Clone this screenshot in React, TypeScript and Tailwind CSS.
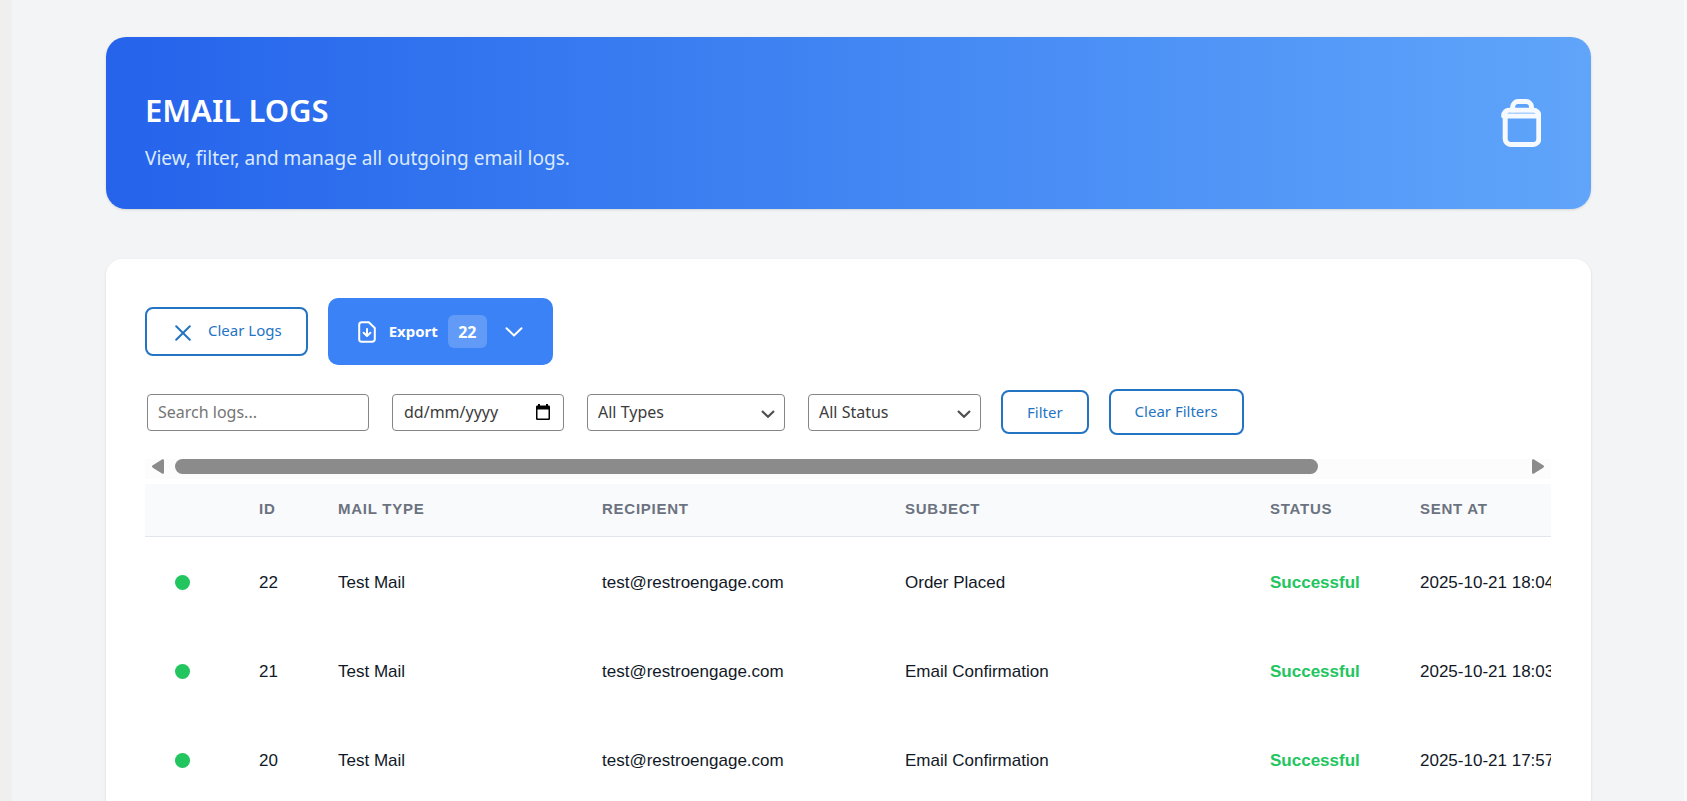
import { useRef, useState } from "react";

type Log = {
  id: number;
  type: string;
  recipient: string;
  subject: string;
  status: string;
  sentAt: string;
};

const logs: Log[] = [
  { id: 22, type: "Test Mail", recipient: "test@restroengage.com", subject: "Order Placed", status: "Successful", sentAt: "2025-10-21 18:04" },
  { id: 21, type: "Test Mail", recipient: "test@restroengage.com", subject: "Email Confirmation", status: "Successful", sentAt: "2025-10-21 18:03" },
  { id: 20, type: "Test Mail", recipient: "test@restroengage.com", subject: "Email Confirmation", status: "Successful", sentAt: "2025-10-21 17:57" },
];

const outline =
  "flex items-center justify-center rounded-lg border-2 border-[#2474c4] bg-white text-[15px] leading-5 text-[#2474c4]";
const field =
  "h-[37px] w-full rounded border border-[#858585] bg-white text-base text-[#3c3c3c] outline-none";

function BagIcon() {
  return (
    <svg className="h-12 w-10" viewBox="0 0 40 48" fill="none" stroke="#f6faff" strokeWidth="5" strokeLinecap="round" strokeLinejoin="round" aria-hidden="true">
      <path d="M11.7 11V8a5.4 5.4 0 0 1 5.4-5.4h8a5.4 5.4 0 0 1 5.4 5.4v3" />
      <path d="M2.7 17v-.4a5.4 5.4 0 0 1 5.4-5.4h24.3a5.4 5.4 0 0 1 5.4 5.4V40a5.4 5.4 0 0 1-5.4 5.4H9.6A5.4 5.4 0 0 1 4.2 40V17h33" />
      <path d="M8 14.3h6M18 14.3h6M28 14.3h5" stroke="#b4d4fd" strokeWidth="1" />
    </svg>
  );
}

function FileDownIcon() {
  return (
    <svg className="h-[22px] w-[18px]" viewBox="0 0 18 22" fill="none" stroke="white" strokeWidth="2" strokeLinecap="round" strokeLinejoin="round" aria-hidden="true">
      <path d="M3.6 1.2h7.2L16.8 7v11.2a2.6 2.6 0 0 1-2.6 2.6H3.6A2.6 2.6 0 0 1 1.2 18.2V3.8a2.6 2.6 0 0 1 2.4-2.6Z" />
      <path d="M9 8v6.800M5.600 11.800 9 15l3.400-3.200" />
    </svg>
  );
}

function Chevron({ className }: { className: string }) {
  return (
    <svg className={className} viewBox="0 0 18 10" fill="none" stroke="currentColor" strokeWidth="2" strokeLinecap="round" strokeLinejoin="round" aria-hidden="true">
      <path d="m1.500 1.200 7.500 7.300 7.500-7.300" />
    </svg>
  );
}

function SelectField({ label, options, className }: { label: string; options: string[]; className: string }) {
  return (
    <div className={`relative ${className}`}>
      <select aria-label={label} className={`${field} appearance-none pl-[10px] pr-8`}>
        {options.map((o) => (
          <option key={o}>{o}</option>
        ))}
      </select>
      <svg className="pointer-events-none absolute top-4 right-[10px] h-2 w-[14px]" viewBox="0 0 14 8" fill="none" stroke="#505050" strokeWidth="2.2" aria-hidden="true">
        <path d="m1 1 6 5.800L13 1" />
      </svg>
    </div>
  );
}

export default function App() {
  const scroller = useRef<HTMLDivElement>(null);
  const [offset, setOffset] = useState(0);
  const scrollBy = (left: number) => scroller.current?.scrollBy({ left, behavior: "smooth" });
  const onScroll = () => {
    const el = scroller.current;
    if (el) setOffset(el.scrollLeft / el.scrollWidth);
  };

  return (
    <div className="h-screen overflow-hidden border-r-[3px] border-l-[12px] border-r-[#f8f9fb] border-l-[#efefef] bg-[#f3f4f6] pt-[37px] pr-[93px] pl-[94px] font-['Noto_Sans','Open_Sans',sans-serif]">
      <header className="flex items-center justify-between rounded-[20px] bg-linear-to-r from-[#2563eb] to-[#60a5fa] py-[39px] pr-[50px] pl-[39px] shadow">
        <div className="pt-[14px]">
          <h1 className="text-[31px] leading-10 font-semibold text-white">EMAIL LOGS</h1>
          <p className="mt-4 text-[19px] leading-6 text-[#dbeafe]">View, filter, and manage all outgoing email logs.</p>
        </div>
        <BagIcon />
      </header>

      <main className="mt-[50px] rounded-2xl bg-white pt-[39px] pr-10 pb-10 pl-[39px] shadow">
        <div className="flex items-center gap-5">
          <button type="button" className={`${outline} h-[49px] gap-[17px] px-6`}>
            <svg className="mt-0.5 ml-1 h-4 w-4" viewBox="0 0 16 16" fill="none" stroke="currentColor" strokeWidth="2" strokeLinecap="round" aria-hidden="true">
              <path d="m1.200 1.200 13.600 13.600M14.800 1.200 1.200 14.800" />
            </svg>
            <span className="pb-1">Clear Logs</span>
          </button>
          <button type="button" className="flex h-[67px] items-center rounded-[10px] bg-[#3b82f6] px-[30px] text-[15px] font-bold text-white">
            <FileDownIcon />
            <span className="ml-[13px]">Export</span>
            <span className="ml-[10px] flex h-[33px] w-[39px] items-center justify-center rounded-md bg-white/20 text-base">22</span>
            <Chevron className="ml-[18px] h-[10px] w-[18px]" />
          </button>
        </div>

        <form className="mt-6 flex items-center gap-5" onSubmit={(e) => e.preventDefault()}>
          <div className="flex gap-[23px] pl-0.5">
            <div className="w-[222px]">
              <input type="text" aria-label="Search logs" placeholder="Search logs..." className={`${field} px-[10px] placeholder:text-[#757575]`} />
            </div>
            <div className="relative w-[172px]">
              <input type="text" aria-label="Date" placeholder="dd/mm/yyyy" className={`${field} pr-9 pl-[11px] placeholder:text-[#3c3c3c]`} />
              <button type="button" aria-label="Open calendar" className="absolute top-[10px] right-[14px]">
                <svg className="h-4 w-[14px]" viewBox="0 0 14 16" aria-hidden="true">
                  <path fill="black" fillRule="evenodd" d="M2 0h2v1.5h6V0h2v1.5h.8A1.2 1.2 0 0 1 14 2.700V14.800A1.200 1.200 0 0 1 12.800 16H1.200A1.200 1.200 0 0 1 0 14.800V2.700A1.200 1.200 0 0 1 1.200 1.500H2ZM1.500 5.500v9h11v-9Z" />
                </svg>
              </button>
            </div>
            <SelectField label="Mail type" className="w-[198px]" options={["All Types"]} />
            <SelectField label="Status" className="w-[173px]" options={["All Status"]} />
          </div>
          <button type="submit" className={`${outline} h-11 px-6`}>Filter</button>
          <button type="reset" className={`${outline} h-[46px] px-6 pb-0.5`}>Clear Filters</button>
        </form>

        <div className="mt-6 flex h-5 bg-[#fcfcfc]">
          <button type="button" aria-label="Scroll left" className="h-[15px] w-[30px] pl-[7px]" onClick={() => scrollBy(-200)}>
            <svg className="h-[15px] w-3" viewBox="0 0 12 15" fill="#8b8b8b" aria-hidden="true">
              <path d="M12 1.500v12a1.300 1.300 0 0 1-2 1.100L.8 8.700a1.500 1.500 0 0 1 0-2.400L10 .4a1.300 1.300 0 0 1 2 1.100Z" />
            </svg>
          </button>
          <div className="flex-1">
            <div className="h-[15px] w-[84.5%] rounded-full bg-[#8b8b8b]" style={{ marginLeft: `${offset * 100}%` }} />
          </div>
          <button type="button" aria-label="Scroll right" className="h-[15px] w-[23px] pl-1" onClick={() => scrollBy(200)}>
            <svg className="h-[15px] w-3" viewBox="0 0 12 15" fill="#8b8b8b" aria-hidden="true">
              <path d="M0 1.500v12a1.300 1.300 0 0 0 2 1.100l9.200-5.900a1.500 1.500 0 0 0 0-2.400L2 .4A1.300 1.300 0 0 0 0 1.500Z" />
            </svg>
          </button>
        </div>

        <div ref={scroller} onScroll={onScroll} className="mt-[5px] overflow-x-auto [scrollbar-width:none]">
          <table className="w-[1664px] table-fixed text-left font-['Liberation_Sans',Arial,sans-serif] whitespace-nowrap">
            <colgroup>
              <col className="w-[84px]" />
              <col className="w-[79px]" />
              <col className="w-[264px]" />
              <col className="w-[303px]" />
              <col className="w-[365px]" />
              <col className="w-[150px]" />
              <col />
            </colgroup>
            <thead>
              <tr className="h-[52px] border-b border-[#e2e5e9] bg-[#f9fafb] text-[15px] tracking-wider text-[#6b7280] [&>th]:px-[30px] [&>th]:pb-0.5">
                <td />
                <th scope="col">ID</th>
                <th scope="col">MAIL TYPE</th>
                <th scope="col">RECIPIENT</th>
                <th scope="col">SUBJECT</th>
                <th scope="col">STATUS</th>
                <th scope="col">SENT AT</th>
              </tr>
            </thead>
            <tbody>
              {logs.map((log) => (
                <tr key={log.id} className="h-[89px] text-[17px] text-[#111827] [&>td]:pt-1 [&>td]:pl-[30px]">
                  <td><div className="h-[15px] w-[15px] rounded-full bg-[#22c55e]" /></td>
                  <td>{log.id}</td>
                  <td>{log.type}</td>
                  <td>{log.recipient}</td>
                  <td>{log.subject}</td>
                  <td className="font-bold text-[#22c55e]">{log.status}</td>
                  <td>{log.sentAt}</td>
                </tr>
              ))}
            </tbody>
          </table>
        </div>
      </main>
    </div>
  );
}
